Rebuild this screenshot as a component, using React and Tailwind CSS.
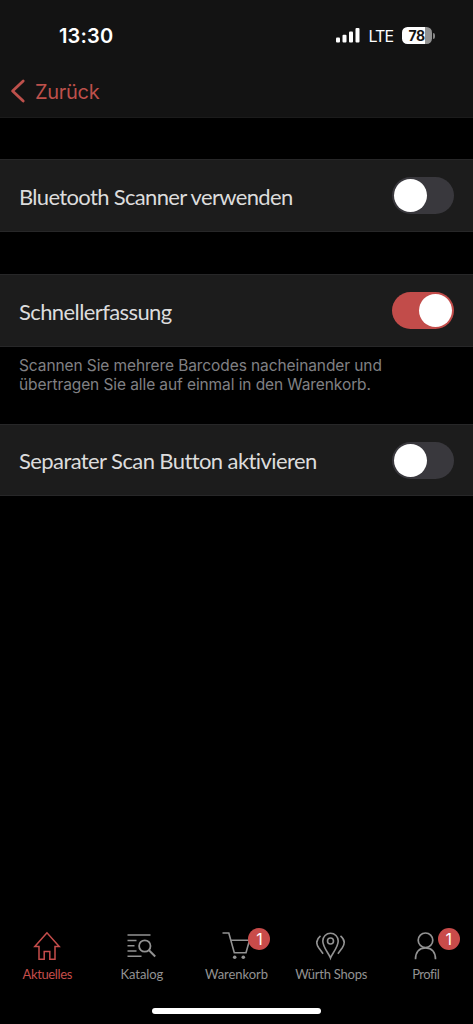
import { useState } from "react";

const labelFont = "font-[Lato,sans-serif]";

function Toggle({ on, onClick, label }) {
  return (
    <button
      role="switch"
      aria-checked={on}
      aria-label={label}
      onClick={onClick}
      className={`flex h-[37px] w-[62px] shrink-0 items-center rounded-full px-[2px] ${on ? "justify-end bg-[#c24c4a]" : "justify-start bg-[#39383d]"}`}
    >
      <span className="size-[33px] rounded-full bg-white" />
    </button>
  );
}

function SettingRow({ label, className, textClass, on, onClick }) {
  return (
    <div className={`flex items-center justify-between border-y border-[#272728] bg-[#1c1c1c] pr-[19px] pl-[19px] ${className}`}>
      <span className={`${labelFont} pt-[2px] text-[22px] leading-[26px] whitespace-nowrap text-[#dcdcdc] ${textClass}`}>{label}</span>
      <Toggle on={on} onClick={onClick} label={label} />
    </div>
  );
}

function Signal() {
  return (
    <svg width="24" height="16" viewBox="0 0 24 16" fill="white">
      <rect x="0" y="9.5" width="4" height="5" rx="1" />
      <rect x="6.5" y="6.8" width="4" height="7.7" rx="1" />
      <rect x="13" y="3.5" width="4" height="11" rx="1" />
      <rect x="19.5" y="0" width="4" height="14.5" rx="1" />
    </svg>
  );
}

function Battery() {
  return (
    <div className="flex items-center">
      <div className="flex h-[17px] w-[30px] items-center justify-center rounded-[5.5px] bg-linear-to-r from-white from-78% to-[#929292] to-78% pr-[1px] font-[Inter,sans-serif] text-[14px] font-bold tracking-[-0.5px] text-[#131313]">
        78
      </div>
      <span className="ml-[1px] h-[6px] w-[2px] rounded-r-full bg-[#858585]" />
    </div>
  );
}

function HomeIcon() {
  return (
    <svg width="28" height="30" viewBox="0 0 28 30" fill="none" stroke="currentColor" strokeWidth="1.5">
      <path d="M14 1.8 1.8 15.5H6V28.3H11.2V20.5H16.8V28.3H22V15.5H26.2Z" />
    </svg>
  );
}

function CatalogIcon() {
  return (
    <svg width="30" height="30" viewBox="0 0 30 30" fill="none" stroke="currentColor" strokeWidth="1.6">
      <path d="M0.5 4H23.5M0.5 9.5H9.5M0.5 14.8H7.5M0.5 20H9.5M0.5 25.3H14.5" />
      <circle cx="17.8" cy="15" r="5.7" strokeWidth="1.8" />
      <path d="M22 19.3 28.2 25.5" strokeWidth="2" />
    </svg>
  );
}

function CartIcon() {
  return (
    <svg width="30" height="30" viewBox="0 0 30 30" fill="none" stroke="currentColor" strokeWidth="1.6">
      <path d="M1.5 2H7.8L13.3 21.7H25L28.5 9.2H9.9" />
      <circle cx="13.7" cy="26.3" r="1.8" fill="currentColor" stroke="none" />
      <circle cx="22.3" cy="26.3" r="1.8" fill="currentColor" stroke="none" />
    </svg>
  );
}

function ShopsIcon() {
  return (
    <svg width="30" height="30" viewBox="0 0 30 30" fill="none" stroke="currentColor" strokeWidth="1.6">
      <path d="M14.5 27C13.1 22.8 6.8 16.4 6.8 10A7.7 7.7 0 0 1 22.2 10C22.2 16.4 15.9 22.8 14.5 27Z" />
      <circle cx="14.5" cy="10" r="3" />
      <path d="M4.5 4.8C.2 8.3 0 12.8 2.7 16.8L7.1 22.8M24.5 4.8C28.8 8.3 29 12.8 26.3 16.8L21.9 22.8" />
    </svg>
  );
}

function ProfileIcon() {
  return (
    <svg width="24" height="30" viewBox="0 0 24 30" fill="none" stroke="currentColor" strokeWidth="1.7">
      <circle cx="11.5" cy="9.3" r="7.3" />
      <path d="M1.5 28.3C1.5 20.8 5.5 16.8 11.5 16.8S21.5 20.8 21.5 28.3" />
    </svg>
  );
}

const tabs = [
  { label: "Aktuelles", Icon: HomeIcon, text: "tracking-[-0.35px]" },
  { label: "Katalog", Icon: CatalogIcon, text: "tracking-[-0.05px]" },
  { label: "Warenkorb", Icon: CartIcon, badge: "1", text: "tracking-[-0.05px]" },
  { label: "Würth Shops", Icon: ShopsIcon, text: "tracking-[-0.25px]" },
  { label: "Profil", Icon: ProfileIcon, badge: "1", text: "tracking-[-0.5px]" },
];

export default function App() {
  const [bluetooth, setBluetooth] = useState(false);
  const [quick, setQuick] = useState(true);
  const [separate, setSeparate] = useState(false);
  const [active, setActive] = useState("Aktuelles");

  return (
    <div className="flex h-screen flex-col overflow-hidden bg-black">
      <header className="h-[118px] shrink-0 border-b border-[#1b1b1b] bg-[#131313]">
        {/* Status bar */}
        <div className="flex h-[71px] items-center justify-between pr-[38px] pl-[59px] text-white">
          <span className="font-[Inter,sans-serif] text-[20px] font-semibold tracking-[0.15px]">13:30</span>
          <div className="flex items-center">
            <Signal />
            <span className="mr-[9px] ml-[9px] font-[Inter,sans-serif] text-[16px] tracking-[-1px]">LTE</span>
            <Battery />
          </div>
        </div>
        <button className="flex h-10 items-center pl-[10px] text-[#bd504b]">
          <svg width="16" height="24" viewBox="0 0 16 24" fill="none" stroke="currentColor" strokeWidth="2.8" strokeLinecap="round" strokeLinejoin="round">
            <path d="M13.2 2 2.6 12 13.2 22" />
          </svg>
          <span className="mt-[1px] ml-[9px] font-[Inter,sans-serif] text-[20px] tracking-[-0.3px]">Zurück</span>
        </button>
      </header>

      <main className="grow pt-[41px]">
        <SettingRow
          label="Bluetooth Scanner verwenden"
          className="h-[73px]"
          textClass="tracking-[-0.66px]"
          on={bluetooth}
          onClick={() => setBluetooth(!bluetooth)}
        />
        <SettingRow
          label="Schnellerfassung"
          className="mt-[42px] h-[73px]"
          textClass="tracking-[-0.6px]"
          on={quick}
          onClick={() => setQuick(!quick)}
        />
        <p className="mt-[9px] pl-[19px] font-[Inter,sans-serif] text-[15.5px] leading-[19px] tracking-[-0.09px] text-[#808084]">
          Scannen Sie mehrere Barcodes nacheinander und
          <br />
          übertragen Sie alle auf einmal in den Warenkorb.
        </p>
        <SettingRow
          label="Separater Scan Button aktivieren"
          className="mt-[30px] h-[72px]"
          textClass="tracking-[-0.59px]"
          on={separate}
          onClick={() => setSeparate(!separate)}
        />
      </main>

      <nav className="grid shrink-0 grid-cols-5">
        {tabs.map(({ label, Icon, badge, text }) => (
          <button
            key={label}
            onClick={() => setActive(label)}
            className={`flex flex-col items-center ${active === label ? "text-[#c54d4b]" : "text-[#929292]"}`}
          >
            <span className="relative">
              <Icon />
              {badge && (
                <span className="absolute -top-[3px] left-1/2 ml-[12px] flex size-[22px] items-center justify-center rounded-full bg-[#c94b4a] font-[Inter,sans-serif] text-[16px] text-white">
                  {badge}
                </span>
              )}
            </span>
            <span className={`${labelFont} mt-[4px] text-[13px] leading-[18px] whitespace-nowrap ${text}`}>{label}</span>
          </button>
        ))}
      </nav>
      <div className="flex h-[41px] shrink-0 justify-center pt-[25px]">
        <div className="h-[6px] w-[169px] rounded-full bg-white" />
      </div>
    </div>
  );
}
